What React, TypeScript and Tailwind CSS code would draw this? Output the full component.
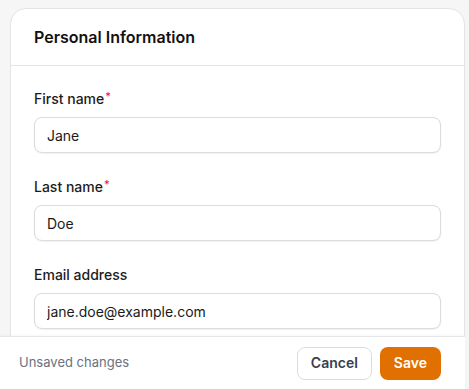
import React from 'react';

interface Field {
  label: string;
  value: string;
  required?: boolean;
}

const fields: Field[] = [
  { label: 'First name', value: 'Jane', required: true },
  { label: 'Last name', value: 'Doe', required: true },
  { label: 'Email address', value: 'jane.doe@example.com' },
];

export default function App() {
  return (
    <div
      className="h-[389px] w-[469px] bg-[#f6f6f6] flex flex-col overflow-hidden"
      style={{ fontFamily: 'Inter, "Noto Sans", sans-serif' }}
    >
      {/* Scrollable area */}
      <div className="flex-1 min-h-0 overflow-hidden pl-[10px] pt-[8px] pr-[4px]">
        <div className="bg-white border border-[#e4e4e4] rounded-2xl">
          {/* Header */}
          <div className="px-[23px] py-4 border-b border-[#e4e4e4]">
            <h2 className="text-base leading-6 font-semibold text-[#111111]">
              Personal Information
            </h2>
          </div>

          {/* Fields */}
          <div className="px-[23px] pt-[23px] pb-6 flex flex-col gap-6">
            {fields.map((f) => (
              <div key={f.label} className="flex flex-col gap-2">
                <label className="text-sm leading-5 font-medium text-[#1c1c1c]">
                  {f.label}
                  {f.required && (
                    <span className="text-[#e11d48] text-[11px] align-top relative -top-[3px] ml-px">*</span>
                  )}
                </label>
                <input
                  readOnly
                  value={f.value}
                  className="h-9 w-full rounded-lg border border-[#dcdcdc] bg-white px-3 text-sm text-[#1a1a1a] shadow-[0_1px_2px_rgba(0,0,0,0.06)] outline-none"
                  style={{ fontFamily: 'Inter, "Noto Sans", sans-serif' }}
                />
              </div>
            ))}
          </div>
        </div>
      </div>

      {/* Footer */}
      <div className="h-[53px] w-[465px] shrink-0 bg-white border-t border-[#e6e6e6] shadow-[0_-1px_3px_rgba(0,0,0,0.03)] flex items-center justify-between pl-[19px] pr-6">
        <span className="text-[13px] text-[#6b7280]">Unsaved changes</span>
        <div className="flex items-center gap-2">
          <button className="h-[33px] px-[13px] rounded-lg border border-[#d9dce1] bg-white text-sm font-semibold text-[#374151]">
            Cancel
          </button>
          <button className="h-[33px] px-[14px] rounded-lg bg-[#e07000] text-sm font-semibold text-white">
            Save
          </button>
        </div>
      </div>
    </div>
  );
}
